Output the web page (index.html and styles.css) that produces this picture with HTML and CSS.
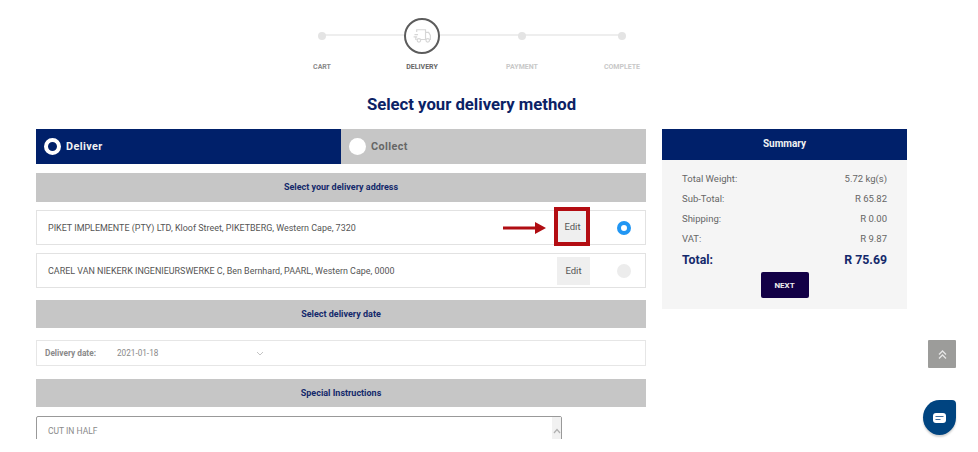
FILE: index.html
```html
<!DOCTYPE html>
<html lang="en">
<head>
  <meta charset="UTF-8" />
  <meta name="viewport" content="width=device-width, initial-scale=1" />
  <title>Select your delivery method</title>
  <link rel="stylesheet" href="styles.css">
</head>
<body>
  <div class="page">
    <div class="stepper">
      <div class="step">
        <div class="step-mark"><span class="step-dot"></span></div>
        <div class="step-label done">CART</div>
      </div>
      <div class="step">
        <div class="step-mark">
          <span class="step-ring">
            <svg width="20" height="15" viewBox="0 0 22 17" fill="none" stroke="#d6d6d6" stroke-width="1.3">
              <path d="M5 13H4V10M2.500 7.500h4M1.500 10h4M5 4.500V2h10v11H9.500M15 5h3.500l2 3.500V13h-1M15 13h.5" />
              <circle cx="7.500" cy="14" r="2" />
              <circle cx="17.500" cy="14" r="2" />
            </svg>
          </span>
        </div>
        <div class="step-label current">DELIVERY</div>
      </div>
      <div class="step">
        <div class="step-mark"><span class="step-dot"></span></div>
        <div class="step-label">PAYMENT</div>
      </div>
      <div class="step">
        <div class="step-mark"><span class="step-dot"></span></div>
        <div class="step-label">COMPLETE</div>
      </div>
    </div>

    <h1 class="page-title">Select your delivery method</h1>

    <div class="columns">
      <div class="main-col">
        <div class="tabs">
          <div class="tab tab-active"><span class="tab-radio tab-radio-on"></span>Deliver</div>
          <div class="tab"><span class="tab-radio"></span>Collect</div>
        </div>

        <div class="bar bar-address">Select your delivery address</div>

        <div class="address-row">
          <span class="address-text">PIKET IMPLEMENTE (PTY) LTD, Kloof Street, PIKETBERG, Western Cape, 7320</span>
          <svg class="arrow" width="43" height="12" viewBox="0 0 43 12">
            <path d="M0 4.500h32V0l11 6-11 6V7.500H0z" fill="#b00d12" />
          </svg>
          <span class="edit-btn edit-marked">Edit</span>
          <span class="radio radio-on"></span>
        </div>
        <div class="address-row">
          <span class="address-text">CAREL VAN NIEKERK INGENIEURSWERKE C, Ben Bernhard, PAARL, Western Cape, 0000</span>
          <span class="edit-btn">Edit</span>
          <span class="radio"></span>
        </div>

        <div class="bar bar-date">Select delivery date</div>

        <div class="date-row">
          <span class="date-label">Delivery date:</span>
          <span class="date-value">2021-01-18</span>
          <svg class="date-chevron" width="8" height="5" viewBox="0 0 8 5" fill="none" stroke="#c4c4c4" stroke-width="1">
            <path d="M1 1l3 3 3-3" />
          </svg>
        </div>

        <div class="bar bar-special">Special Instructions</div>

        <div class="instructions">
          <span class="instructions-text">CUT IN HALF</span>
          <span class="scrollbar">
            <svg width="8" height="6" viewBox="0 0 8 6" fill="none" stroke="#b0b0b0" stroke-width="1.2">
              <path d="M1 5l3-3.500L7 5" />
            </svg>
          </span>
        </div>
      </div>

      <div class="summary">
        <div class="summary-head">Summary</div>
        <div class="summary-body">
          <div class="summary-row"><span>Total Weight:</span><span>5.72 kg(s)</span></div>
          <div class="summary-row"><span>Sub-Total:</span><span>R 65.82</span></div>
          <div class="summary-row"><span>Shipping:</span><span>R 0.00</span></div>
          <div class="summary-row"><span>VAT:</span><span>R 9.87</span></div>
          <div class="summary-total"><span>Total:</span><span>R 75.69</span></div>
          <button class="next-btn">NEXT</button>
        </div>
      </div>
    </div>
  </div>

  <button class="to-top">
    <svg width="11" height="11" viewBox="0 0 11 11" fill="none" stroke="#e6e6e6" stroke-width="1.300">
      <path d="M2 5.500l3.500-3.500L9 5.500M2 9.500L5.500 6 9 9.500" />
    </svg>
  </button>
  <div class="chat">
    <svg width="13" height="10" viewBox="0 0 13 10">
      <path d="M3 0h7a3 3 0 0 1 3 3v4a3 3 0 0 1-3 3H3a3 3 0 0 1-3-3V3a3 3 0 0 1 3-3z" fill="#fff" />
      <path d="M2.500 3.500h8M2.500 6.500h5" stroke="#3f6f9f" stroke-width="1.200" />
    </svg>
  </div>
</body>
</html>
```

FILE: styles.css
```css
html, body {
  margin: 0;
  padding: 0;
  height: 100%;
  background: #fff;
  font-family: Roboto, "Liberation Sans", sans-serif;
  overflow: hidden;
}
.page {
  height: 439px;
  overflow: hidden;
  padding-left: 36px;
  box-sizing: border-box;
}

/* stepper */
.stepper {
  display: flex;
  width: 400px;
  margin-left: 236px;
  padding-top: 17px;
  position: relative;
}
.stepper::before {
  content: "";
  position: absolute;
  top: 34px;
  left: 50px;
  right: 50px;
  height: 2px;
  background: #eeeeee;
}
.step {
  width: 100px;
  text-align: center;
  position: relative;
}
.step-mark {
  height: 37px;
  display: flex;
  align-items: center;
  justify-content: center;
}
.step-dot {
  width: 8px;
  height: 8px;
  border-radius: 50%;
  background: #e4e4e4;
}
.step-ring {
  width: 32px;
  height: 32px;
  border: 2px solid #5c5c5c;
  border-radius: 50%;
  background: #fff;
  display: flex;
  align-items: center;
  justify-content: center;
}
.step-label {
  margin-top: 9px;
  font-size: 7px;
  line-height: 9px;
  font-weight: 700;
  color: #c8c8c8;
}
.step-label.done {
  color: #8a8a8a;
}
.step-label.current {
  color: #666;
}

.page-title {
  margin: 21px 0 0;
  width: 871px;
  text-align: center;
  font-size: 16.700px;
  line-height: 24px;
  font-weight: 700;
  color: #0b2265;
}

.columns {
  display: flex;
  align-items: flex-start;
  gap: 16px;
  margin-top: 12px;
}
.main-col {
  width: 610px;
}

/* deliver / collect */
.tabs {
  display: flex;
  height: 35px;
}
.tab {
  flex: 1;
  display: flex;
  align-items: center;
  gap: 5px;
  padding-left: 8px;
  background: #c6c6c6;
  color: #666;
  font-size: 10.800px;
  font-weight: 700;
  letter-spacing: 0.4px;
}
.tab-active {
  flex: 0 0 305px;
  box-sizing: border-box;
  background: #00206a;
  color: #f2f2f2;
}
.tab-radio {
  width: 17px;
  height: 17px;
  border-radius: 50%;
  background: #fff;
  box-sizing: border-box;
}
.tab-radio-on {
  border: 4px solid #fff;
  background: #00206a;
}

.bar {
  background: #c6c6c6;
  color: #14296b;
  text-align: center;
  font-size: 9px;
  font-weight: 700;
}
.bar-address {
  height: 29px;
  line-height: 29px;
  margin-top: 9px;
}
.bar-date {
  height: 28px;
  line-height: 28px;
  margin-top: 12px;
}
.bar-special {
  height: 28px;
  line-height: 28px;
  margin-top: 13px;
}

/* addresses */
.address-row {
  display: flex;
  align-items: center;
  height: 35px;
  margin-top: 8px;
  padding: 0 14px 0 11px;
  border: 1px solid #e2e2e2;
  box-sizing: border-box;
  font-size: 8.950px;
  color: #555;
}
.address-text {
  flex: 1;
}
.arrow {
  margin-right: 8px;
}
.edit-btn {
  width: 33px;
  height: 28px;
  line-height: 28px;
  text-align: center;
  background: #efefef;
  color: #555;
  font-size: 9.500px;
  margin-right: 27px;
}
.edit-marked {
  width: 36px;
  height: 39px;
  line-height: 31px;
  margin-bottom: 2px;
  padding-left: 1px;
  border: 4px solid #b30d12;
  box-sizing: border-box;
}
.radio {
  width: 14px;
  height: 14px;
  border-radius: 50%;
  background: #ececec;
  box-sizing: border-box;
}
.radio-on {
  border: 4.500px solid #2196f3;
  background: #fff;
}

/* date */
.date-row {
  display: flex;
  align-items: center;
  height: 26px;
  margin-top: 12px;
  padding-left: 8px;
  border: 1px solid #e6e6e6;
  box-sizing: border-box;
  font-size: 8.300px;
  color: #8a8a8a;
}
.date-label {
  width: 72px;
  font-weight: 700;
}
.date-value {
  width: 139px;
  font-size: 8.200px;
}
.instructions {
  display: flex;
  justify-content: space-between;
  width: 526px;
  height: 40px;
  margin-top: 9px;
  padding-left: 11px;
  border: 1px solid #999;
  border-radius: 2px;
  box-sizing: border-box;
  font-size: 8.500px;
  color: #8a8a8a;
}
.instructions-text {
  padding-top: 9px;
}
.scrollbar {
  width: 9px;
  padding-top: 9px;
  background: #f1f1f1;
  text-align: center;
}

/* summary */
.summary {
  width: 245px;
}
.summary-head {
  height: 31px;
  line-height: 30px;
  text-align: center;
  background: #00206a;
  color: #f2f2f2;
  font-size: 10px;
  font-weight: 700;
}
.summary-body {
  display: flex;
  flex-direction: column;
  height: 149px;
  padding: 9px 20px 0;
  box-sizing: border-box;
  background: #f5f5f5;
}
.summary-row {
  display: flex;
  justify-content: space-between;
  height: 20px;
  line-height: 20px;
  font-size: 9.500px;
  color: #666;
}
.summary-total {
  display: flex;
  justify-content: space-between;
  height: 23px;
  line-height: 23px;
  font-size: 12.300px;
  font-weight: 700;
  color: #14296b;
}
.next-btn {
  align-self: center;
  width: 48px;
  height: 26px;
  padding: 0;
  border: none;
  border-radius: 2px;
  background: #120046;
  color: #eee;
  font-family: inherit;
  font-size: 8px;
  font-weight: 700;
}

/* floating widgets */
.to-top {
  position: absolute;
  top: 340px;
  left: 928px;
  width: 28px;
  height: 28px;
  padding: 0;
  border: none;
  border-radius: 1px;
  background: #9c9c9a;
  display: flex;
  align-items: center;
  justify-content: center;
}
.chat {
  position: absolute;
  top: 400px;
  left: 923px;
  width: 33px;
  height: 35px;
  border-radius: 50% 4px 50% 50%;
  background: #004480;
  box-shadow: 0 2px 2px rgba(0, 0, 0, 0.18);
  display: flex;
  align-items: center;
  justify-content: center;
}
```
